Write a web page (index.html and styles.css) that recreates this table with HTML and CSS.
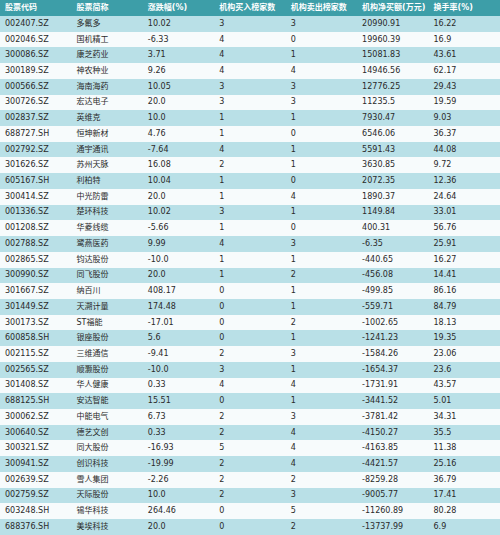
FILE: index.html
```html
<!DOCTYPE html>
<html lang="zh">
<head>
<meta charset="utf-8">
<link rel="stylesheet" href="styles.css">
</head>
<body>
<table class="grid">
<colgroup><col class="c"><col class="c"><col class="c"><col class="c"><col class="c"><col class="c"><col class="c"></colgroup>
<thead>
<tr><th>股票代码</th><th>股票简称</th><th>涨跌幅(%)</th><th>机构买入榜家数</th><th>机构卖出榜家数</th><th>机构净买额(万元)</th><th>换手率(%)</th></tr>
</thead>
<tbody>
<tr><td>002407.SZ</td><td>多氟多</td><td>10.02</td><td>3</td><td>3</td><td>20990.91</td><td>16.22</td></tr>
<tr><td>002046.SZ</td><td>国机精工</td><td>-6.33</td><td>4</td><td>0</td><td>19960.39</td><td>16.9</td></tr>
<tr><td>300086.SZ</td><td>康芝药业</td><td>3.71</td><td>4</td><td>1</td><td>15081.83</td><td>43.61</td></tr>
<tr><td>300189.SZ</td><td>神农种业</td><td>9.26</td><td>4</td><td>4</td><td>14946.56</td><td>62.17</td></tr>
<tr><td>000566.SZ</td><td>海南海药</td><td>10.05</td><td>3</td><td>3</td><td>12776.25</td><td>29.43</td></tr>
<tr><td>300726.SZ</td><td>宏达电子</td><td>20.0</td><td>3</td><td>3</td><td>11235.5</td><td>19.59</td></tr>
<tr><td>002837.SZ</td><td>英维克</td><td>10.0</td><td>1</td><td>1</td><td>7930.47</td><td>9.03</td></tr>
<tr><td>688727.SH</td><td>恒坤新材</td><td>4.76</td><td>1</td><td>0</td><td>6546.06</td><td>36.37</td></tr>
<tr><td>002792.SZ</td><td>通宇通讯</td><td>-7.64</td><td>4</td><td>1</td><td>5591.43</td><td>44.08</td></tr>
<tr><td>301626.SZ</td><td>苏州天脉</td><td>16.08</td><td>2</td><td>1</td><td>3630.85</td><td>9.72</td></tr>
<tr><td>605167.SH</td><td>利柏特</td><td>10.04</td><td>1</td><td>0</td><td>2072.35</td><td>12.36</td></tr>
<tr><td>300414.SZ</td><td>中光防雷</td><td>20.0</td><td>1</td><td>4</td><td>1890.37</td><td>24.64</td></tr>
<tr><td>001336.SZ</td><td>楚环科技</td><td>10.02</td><td>3</td><td>1</td><td>1149.84</td><td>33.01</td></tr>
<tr><td>001208.SZ</td><td>华菱线缆</td><td>-5.66</td><td>1</td><td>0</td><td>400.31</td><td>56.76</td></tr>
<tr><td>002788.SZ</td><td>鹭燕医药</td><td>9.99</td><td>4</td><td>3</td><td>-6.35</td><td>25.91</td></tr>
<tr><td>002865.SZ</td><td>钧达股份</td><td>-10.0</td><td>1</td><td>1</td><td>-440.65</td><td>16.27</td></tr>
<tr><td>300990.SZ</td><td>同飞股份</td><td>20.0</td><td>1</td><td>2</td><td>-456.08</td><td>14.41</td></tr>
<tr><td>301667.SZ</td><td>纳百川</td><td>408.17</td><td>0</td><td>1</td><td>-499.85</td><td>86.16</td></tr>
<tr><td>301449.SZ</td><td>天溯计量</td><td>174.48</td><td>0</td><td>1</td><td>-559.71</td><td>84.79</td></tr>
<tr><td>300173.SZ</td><td>ST福能</td><td>-17.01</td><td>0</td><td>2</td><td>-1002.65</td><td>18.13</td></tr>
<tr><td>600858.SH</td><td>银座股份</td><td>5.6</td><td>0</td><td>1</td><td>-1241.23</td><td>19.35</td></tr>
<tr><td>002115.SZ</td><td>三维通信</td><td>-9.41</td><td>2</td><td>3</td><td>-1584.26</td><td>23.06</td></tr>
<tr><td>002565.SZ</td><td>顺灏股份</td><td>-10.0</td><td>3</td><td>1</td><td>-1654.37</td><td>23.6</td></tr>
<tr><td>301408.SZ</td><td>华人健康</td><td>0.33</td><td>4</td><td>4</td><td>-1731.91</td><td>43.57</td></tr>
<tr><td>688125.SH</td><td>安达智能</td><td>15.51</td><td>0</td><td>1</td><td>-3441.52</td><td>5.01</td></tr>
<tr><td>300062.SZ</td><td>中能电气</td><td>6.73</td><td>2</td><td>3</td><td>-3781.42</td><td>34.31</td></tr>
<tr><td>300640.SZ</td><td>德艺文创</td><td>0.33</td><td>2</td><td>4</td><td>-4150.27</td><td>35.5</td></tr>
<tr><td>300321.SZ</td><td>同大股份</td><td>-16.93</td><td>5</td><td>4</td><td>-4163.85</td><td>11.38</td></tr>
<tr><td>300941.SZ</td><td>创识科技</td><td>-19.99</td><td>2</td><td>4</td><td>-4421.57</td><td>25.16</td></tr>
<tr><td>002639.SZ</td><td>雪人集团</td><td>-2.26</td><td>2</td><td>2</td><td>-8259.28</td><td>36.79</td></tr>
<tr><td>002759.SZ</td><td>天际股份</td><td>10.0</td><td>2</td><td>3</td><td>-9005.77</td><td>17.41</td></tr>
<tr><td>603248.SH</td><td>锡华科技</td><td>264.46</td><td>0</td><td>5</td><td>-11260.89</td><td>80.28</td></tr>
<tr><td>688376.SH</td><td>美埃科技</td><td>20.0</td><td>0</td><td>2</td><td>-13737.99</td><td>6.9</td></tr>
</tbody>
</table>
</body>
</html>
```

FILE: styles.css
```css
html, body {
  margin: 0;
  padding: 0;
  background: #ffffff;
}
.grid {
  width: 500px;
  border-collapse: collapse;
  table-layout: fixed;
  font-family: "DejaVu Sans", "Noto Sans CJK SC", sans-serif;
  font-size: 8px;
  color: #2a2a2a;
}
.grid .c {
  width: 14.2857%;
}
.grid th, .grid td {
  box-sizing: border-box;
  padding: 0 0 0 5px;
  text-align: left;
  white-space: nowrap;
  overflow: hidden;
  line-height: 1;
}
.grid th {
  height: 16px;
  background: #3d9ea8;
  color: #ffffff;
  font-weight: bold;
}
.grid td {
  height: 15.73px;
}
.grid tbody tr:nth-child(odd) {
  background: #b9e0e7;
}
.grid tbody tr:nth-child(even) {
  background: #f7fbfc;
}
```
